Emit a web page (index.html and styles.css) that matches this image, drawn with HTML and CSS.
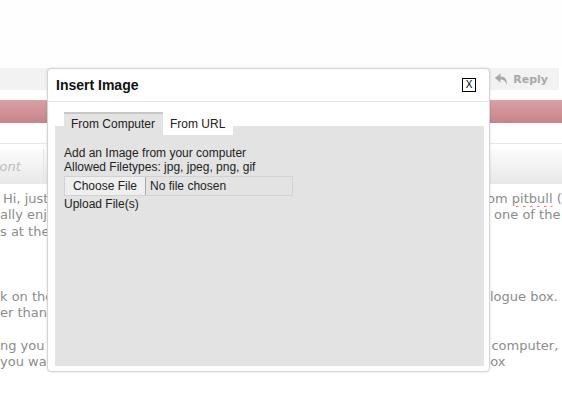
FILE: index.html
```html
<!DOCTYPE html>
<html lang="en">
<head>
<meta charset="utf-8">
<title>Insert Image</title>
<link rel="stylesheet" href="styles.css">
</head>
<body>
<div class="page">
  <div class="top"></div>
  <div class="toolbar">
    <a class="reply" href="#">
      <svg class="reply-icon" width="14" height="13" viewBox="0 0 14 13" aria-hidden="true">
        <path d="M6.5 0.5 L0.8 5 L6.5 9.5 V6.6 C9.8 6.6 11.8 8.2 12.6 12 C13.6 6.8 11.2 3.4 6.5 3.4 Z" fill="#a9a9a9"/>
      </svg>
      <span>Reply</span>
    </a>
  </div>
  <div class="gap"></div>
  <div class="titlebar"></div>
  <div class="gap2"></div>
  <div class="editor-bar">
    <div class="font-select"><span>Font</span></div>
    <div class="editor-rest"></div>
  </div>
  <div class="post">
    <div class="post-row"><span class="left first">Hi, just</span><span class="right">rom <span class="misspelt">pitbull</span> (and</span></div>
    <div class="post-row"><span class="left">ally enjoy</span><span class="right">o one of the</span></div>
    <div class="post-row"><span class="left">s at the</span><span class="right"></span></div>
    <div class="post-row"><span class="left">&nbsp;</span><span class="right"></span></div>
    <div class="post-row"><span class="left">&nbsp;</span><span class="right"></span></div>
    <div class="post-row"><span class="left">&nbsp;</span><span class="right"></span></div>
    <div class="post-row"><span class="left">k on the</span><span class="right">alogue box.</span></div>
    <div class="post-row"><span class="left">er than</span><span class="right"></span></div>
    <div class="post-row"><span class="left">&nbsp;</span><span class="right"></span></div>
    <div class="post-row"><span class="left">ng you into</span><span class="right">r computer,</span></div>
    <div class="post-row"><span class="left">you want</span><span class="right"> box</span></div>
  </div>
</div>

<div class="modal" role="dialog" aria-label="Insert Image">
  <div class="modal-head">
    <div class="modal-title">Insert Image</div>
    <button class="close" type="button">X</button>
  </div>
  <div class="modal-body">
    <div class="tabs">
      <div class="tab tab-active">From Computer</div>
      <div class="tab tab-url">From URL</div>
    </div>
    <div class="panel">
      <div>Add an Image from your computer</div>
      <div>Allowed Filetypes: jpg, jpeg, png, gif</div>
      <input class="file" type="file">
      <div class="upload">Upload File(s)</div>
    </div>
  </div>
</div>
</body>
</html>
```
FILE: styles.css
```css
html, body {
  margin: 0;
  padding: 0;
}
body {
  width: 562px;
  height: 407px;
  overflow: hidden;
  background: #ffffff;
  font-family: "DejaVu Sans", Verdana, sans-serif;
  position: relative;
}
.page {
  width: 562px;
}
.top {
  height: 68px;
  background: #fefefe;
}
.toolbar {
  height: 22px;
  margin-right: 3px;
  background: #f2f2f2;
  display: flex;
  justify-content: flex-end;
  align-items: center;
  padding-right: 11px;
}
.reply {
  display: flex;
  align-items: center;
  gap: 5px;
  color: #a8a8a8;
  font-weight: bold;
  font-size: 11px;
  text-decoration: none;
}
.reply-icon {
  display: block;
}
.gap {
  height: 10px;
}
.titlebar {
  height: 23px;
  background: linear-gradient(#d9a1a5, #c7838a);
}
.gap2 {
  height: 20px;
  border-bottom: 1px solid #e8e8e8;
}
.editor-bar {
  margin-top: 5px;
  height: 35px;
  display: flex;
  background: linear-gradient(#fcfcfc, #e8e8e8);
}
.font-select {
  width: 43px;
  border-right: 1px solid #e4e4e4;
  display: flex;
  align-items: center;
  overflow: hidden;
  font-style: italic;
  font-size: 13px;
  color: #bdbdbd;
}
.font-select span {
  margin-left: -8px;
}
.editor-rest {
  flex: 1;
}
.post {
  padding-top: 7px;
  font-size: 13px;
  line-height: 16.3px;
  color: #8c8c8c;
}
.post-row {
  display: grid;
  grid-template-columns: 48px 434px 1fr;
  height: 16.3px;
  white-space: nowrap;
}
.post-row > span {
  overflow: hidden;
}
.post-row .left {
  grid-column: 1;
}
.post-row .right {
  grid-column: 3;
}
.post-row .first {
  padding-left: 3px;
}
.misspelt {
  text-decoration: underline wavy #e06060;
  text-decoration-thickness: 1px;
  text-underline-offset: 2px;
}

.modal {
  position: absolute;
  left: 47px;
  top: 68px;
  width: 443px;
  height: 304px;
  box-sizing: border-box;
  border: 1px solid #d4d4d4;
  border-radius: 4px;
  background: #ffffff;
  box-shadow: 0 0 3px rgba(0, 0, 0, 0.12);
  display: flex;
  flex-direction: column;
  font-family: "Liberation Sans", Arial, sans-serif;
  color: #222222;
}
.modal-head {
  height: 32px;
  flex: none;
  display: flex;
  align-items: center;
  justify-content: space-between;
  padding: 0 13px 0 8px;
  border-bottom: 1px solid #e6e6e6;
}
.modal-title {
  font-size: 14px;
  font-weight: bold;
  color: #111111;
}
.close {
  width: 14px;
  height: 14px;
  box-sizing: border-box;
  padding: 0;
  border: 1px solid #000000;
  background: #ffffff;
  font-family: "Liberation Sans", Arial, sans-serif;
  font-size: 10px;
  line-height: 12px;
  color: #000000;
  text-align: center;
}
.modal-body {
  flex: 1;
  display: flex;
  flex-direction: column;
  padding: 10px 5px 5px 7px;
}
.tabs {
  display: flex;
  height: 23px;
  padding-left: 9px;
  margin-bottom: -9px;
  position: relative;
  z-index: 1;
}
.tab {
  padding: 0 8px 0 7px;
  font-size: 12px;
  line-height: 21px;
  color: #222222;
}
.tab-active {
  background: #e3e3e3;
  border-top: 2px solid #c8c8c8;
}
.tab-url {
  background: #ffffff;
  border-top: 2px solid #ffffff;
}
.panel {
  flex: 1;
  background: #e3e3e3;
  padding: 20px 9px;
  font-size: 12px;
  line-height: 14px;
  color: #222222;
}
.file {
  display: block;
  box-sizing: border-box;
  width: 229px;
  height: 20px;
  margin: 2px 0 1px;
  padding: 0;
  border: 1px solid #d2d2d2;
  background: transparent;
  font-family: "Liberation Sans", Arial, sans-serif;
  font-size: 12px;
  color: #222222;
}
.file::file-selector-button {
  height: 20px;
  margin: -1px 4px -1px -1px;
  padding: 0 8px;
  border: 1px solid #a8a8a8;
  border-radius: 0;
  background: #efefef;
  font-family: "Liberation Sans", Arial, sans-serif;
  font-size: 12px;
  color: #222222;
}
```
